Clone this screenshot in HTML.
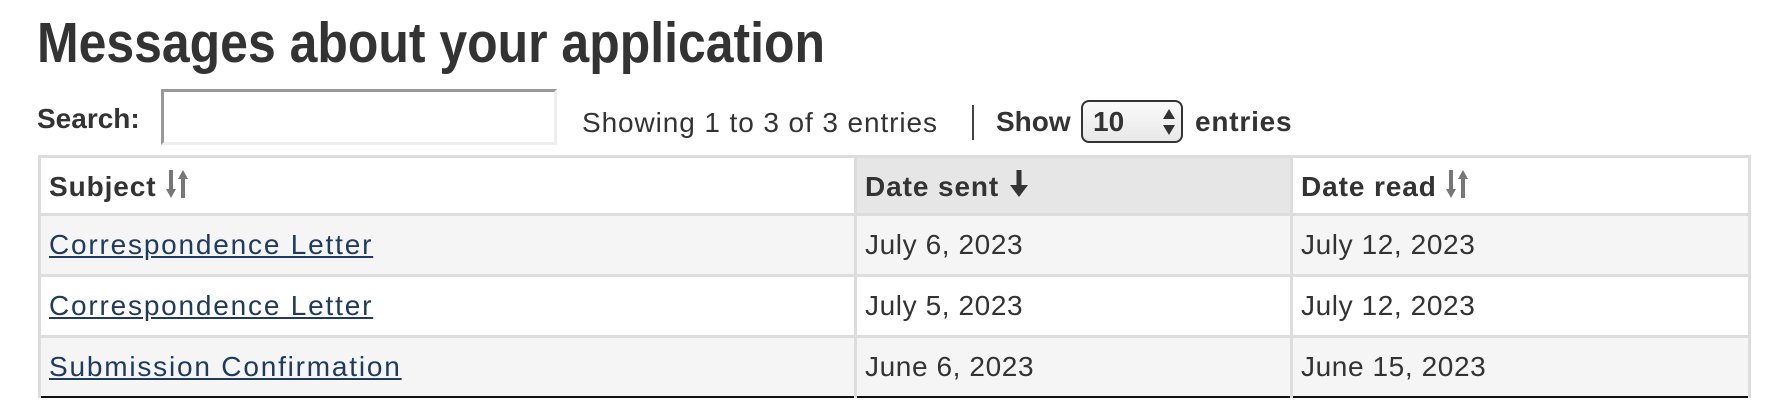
<!DOCTYPE html>
<html><head><meta charset="utf-8"><style>
html,body{margin:0;padding:0;background:#fff;}
body{width:1770px;height:418px;position:relative;overflow:hidden;font-family:"Liberation Sans",sans-serif;color:#333;}
.a{position:absolute;white-space:nowrap;}
h1{position:absolute;left:37px;top:10px;margin:0;font-size:57px;font-weight:bold;color:#333;transform:scaleX(0.876);transform-origin:left top;white-space:nowrap;line-height:66px;}
.lbl{font-size:28px;font-weight:bold;}
.txt{font-size:28px;letter-spacing:0.9px;}
table{position:absolute;left:38px;top:155px;width:1713px;border-collapse:collapse;font-size:28px;}
td,th{border:3px solid #ddd;text-align:left;padding:0 0 0 8px;letter-spacing:0.6px;}
th{height:55px;border-bottom:2px solid #111;font-weight:bold;letter-spacing:0.9px;}
td{height:58px;}
tr.o td{background:#f5f5f5;}
tr.last td{border-bottom:2px solid #111;}
a{color:#1f3a60;text-decoration:underline;letter-spacing:1.8px;}
svg.i{vertical-align:-3px;}
</style></head><body>
<h1>Messages about your application</h1>
<div class="a lbl" style="left:37px;top:103px;">Search:</div>
<div class="a" style="left:161px;top:89px;width:390px;height:50px;border:3px solid;border-color:#999 #eee #eee #999;"></div>
<div class="a txt" style="left:582px;top:107px;">Showing 1 to 3 of 3 entries</div>
<div class="a" style="left:972px;top:105px;width:2px;height:35px;background:#444;"></div>
<div class="a lbl" style="left:996px;top:106px;">Show</div>
<div class="a" style="left:1081px;top:100px;width:98px;height:39px;border:2px solid #333;border-radius:8px;background:linear-gradient(#fafafa,#e8e8e8);"></div>
<div class="a lbl" style="left:1093px;top:106px;">10</div>
<svg class="a" style="left:1162px;top:108px;" width="14" height="28" viewBox="0 0 14 28"><path d="M7 1 L13 11 L1 11Z M7 27 L13 17 L1 17Z" fill="#333"/></svg>
<div class="a lbl" style="left:1195px;top:106px;letter-spacing:0.8px;">entries</div>
<table>
<tr><th style="width:805px;background:#fff;">Subject <svg class="i" width="24" height="30" viewBox="0 0 24 30"><path d="M6 1V24" stroke="#777" stroke-width="4"/><path d="M1 20L6 29L11 20Z" fill="#777"/><path d="M18 29V6" stroke="#777" stroke-width="4"/><path d="M13 10L18 1L23 10Z" fill="#777"/></svg></th><th style="width:425px;background:#e6e6e6;">Date sent <svg class="i" width="22" height="30" viewBox="0 0 22 30"><path d="M11 1V20" stroke="#333" stroke-width="5"/><path d="M2 16L11 28L20 16Z" fill="#333"/></svg></th><th style="background:#fff;">Date read <svg class="i" width="24" height="30" viewBox="0 0 24 30"><path d="M6 1V24" stroke="#777" stroke-width="4"/><path d="M1 20L6 29L11 20Z" fill="#777"/><path d="M18 29V6" stroke="#777" stroke-width="4"/><path d="M13 10L18 1L23 10Z" fill="#777"/></svg></th></tr>
<tr class="o"><td><a>Correspondence Letter</a></td><td>July 6, 2023</td><td>July 12, 2023</td></tr>
<tr><td><a>Correspondence Letter</a></td><td>July 5, 2023</td><td>July 12, 2023</td></tr>
<tr class="o last"><td><a>Submission Confirmation</a></td><td>June 6, 2023</td><td>June 15, 2023</td></tr>
</table>
</body></html>
